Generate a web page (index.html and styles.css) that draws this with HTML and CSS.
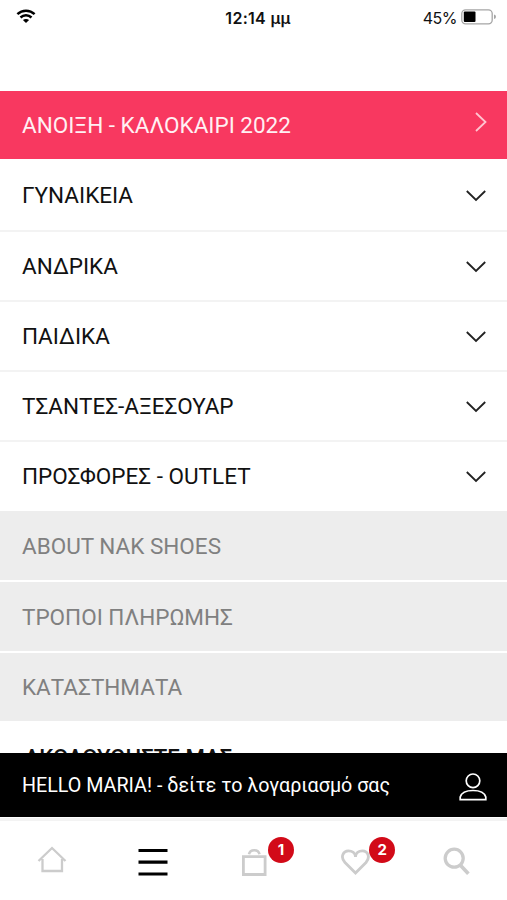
FILE: index.html
```html
<!DOCTYPE html>
<html lang="el">
<head>
<meta charset="utf-8">
<meta name="viewport" content="width=device-width, initial-scale=1">
<title>NAK Shoes</title>
<link rel="stylesheet" href="styles.css">
</head>
<body>
<div class="app">
  <header class="status">
    <svg class="wifi" width="20" height="15" viewBox="0 0 20 15" fill="none" stroke="#000" stroke-width="2.5"><path d="M1.4 5.2C6.2.6 13.8.6 18.6 5.2M4.5 8.5C7.6 5.6 12.4 5.6 15.5 8.5"/><path d="M10 14L6.9 11C8.6 9.5 11.4 9.5 13.1 11Z" fill="#000" stroke="none"/></svg>
    <span class="time">12:14 μμ</span>
    <div class="power">
      <span>45%</span>
      <svg width="36" height="16" viewBox="0 0 36 16"><rect x=".8" y=".8" width="30.4" height="14" rx="3.8" fill="#fff" stroke="#a5a5a5" stroke-width="1.3"/><rect x="2.8" y="2.6" width="11.7" height="10.4" rx="1" fill="#000"/><path d="M33 5.6Q35 6 35 7.8T33 10Z" fill="#a5a5a5"/></svg>
    </div>
  </header>
  <main class="menu">
    <a class="row promo"><span>ΑΝΟΙΞΗ - ΚΑΛΟΚΑΙΡΙ 2022</span><svg class="next" width="12" height="20" viewBox="0 0 12 20"><path d="M1 1L10.5 10L1 19"/></svg></a>
    <a class="row"><span>ΓΥΝΑΙΚΕΙΑ</span><svg class="down" width="20" height="12" viewBox="0 0 20 12"><path d="M.8 1L10 10L19.2 1"/></svg></a>
    <a class="row"><span>ΑΝΔΡΙΚΑ</span><svg class="down" width="20" height="12" viewBox="0 0 20 12"><path d="M.8 1L10 10L19.2 1"/></svg></a>
    <a class="row"><span>ΠΑΙΔΙΚΑ</span><svg class="down" width="20" height="12" viewBox="0 0 20 12"><path d="M.8 1L10 10L19.2 1"/></svg></a>
    <a class="row"><span>ΤΣΑΝΤΕΣ-ΑΞΕΣΟΥΑΡ</span><svg class="down" width="20" height="12" viewBox="0 0 20 12"><path d="M.8 1L10 10L19.2 1"/></svg></a>
    <a class="row last"><span>ΠΡΟΣΦΟΡΕΣ - OUTLET</span><svg class="down" width="20" height="12" viewBox="0 0 20 12"><path d="M.8 1L10 10L19.2 1"/></svg></a>
    <a class="row info first"><span>ABOUT NAK SHOES</span></a>
    <a class="row info"><span>ΤΡΟΠΟΙ ΠΛΗΡΩΜΗΣ</span></a>
    <a class="row info last"><span>ΚΑΤΑΣΤΗΜΑΤΑ</span></a>
    <h2 class="follow">ΑΚΟΛΟΥΘΗΣΤΕ ΜΑΣ</h2>
  </main>
  <a class="account">
    <span>HELLO MARIA! - δείτε το λογαριασμό σας</span>
    <svg width="28" height="28" viewBox="0 0 28 28" fill="none" stroke="#fff" stroke-width="1.7"><circle cx="14" cy="7.8" r="6.8"/><path d="M1.2 26.7V24C2.5 19.5 7 17.5 14 17.5S25.5 19.5 26.8 24V26.7Z"/></svg>
  </a>
  <nav class="tabs">
    <a><svg width="30" height="30" viewBox="0 0 30 30" fill="none" stroke="#ccc" stroke-width="2.3"><path d="M1.5 15L15 2L28.5 15M5.5 13V25H25V13"/></svg></a>
    <a><svg width="30" height="30" viewBox="0 0 30 30" stroke="#000" stroke-width="3.2"><path d="M.5 4.5H29.5M.5 16.2H29.5M.5 28H29.5"/></svg></a>
    <a><svg width="30" height="30" viewBox="0 0 30 30" fill="none" stroke="#ccc" stroke-width="2.8"><path d="M4.4 10.6H26.1V28.5H4.4Z"/><path d="M10 8.3C11 2.8 19.5 2.8 20.5 8.3" stroke-width="2.6"/></svg><b class="badge">1</b></a>
    <a><svg width="30" height="30" viewBox="0 0 30 30" fill="none" stroke="#ccc" stroke-width="2.8"><path d="M15.5 27L5 16.5C-.2 10.8 3.5 4.9 8.3 4.9C12 4.9 15.5 7 15.5 11C15.5 7 18.8 4.9 22.5 4.9C27.5 4.9 30.8 10.8 26 16.5Z"/></svg><b class="badge">2</b></a>
    <a><svg width="30" height="30" viewBox="0 0 30 30" fill="none" stroke="#ccc" stroke-width="3.3"><circle cx="13.2" cy="12.2" r="9"/><path d="M19.2 19L27.4 27.7" stroke-width="3.6"/></svg></a>
  </nav>
</div>
</body>
</html>
```
FILE: styles.css
```css
* { box-sizing: border-box; }

body {
  margin: 0;
  background: #fff;
  color: #111;
  font-family: Roboto, "Liberation Sans", sans-serif;
}

.app {
  height: 900px;
  display: flex;
  flex-direction: column;
  overflow: hidden;
}

.status {
  height: 91px;
  flex: none;
  display: grid;
  grid-template-columns: 1fr auto 1fr;
  align-items: start;
  padding: 7px 10px 0 16px;
  font-family: Inter, sans-serif;
  font-size: 16px;
  line-height: 22px;
}

.wifi { margin-top: 2px; }
.time { font-weight: 600; letter-spacing: .3px; margin-left: 3px; }

.power {
  display: flex;
  justify-content: flex-end;
  gap: 4px;
  letter-spacing: -.5px;
}

.power svg { margin-top: 2px; }

.menu {
  height: 662px;
  flex: none;
  overflow: hidden;
}

.row {
  height: 70.25px;
  display: flex;
  align-items: center;
  justify-content: space-between;
  padding: 0 21px 0 22px;
  border-bottom: 2px solid #f3f3f3;
  font-size: 22.5px;
  line-height: 30px;
  white-space: nowrap;
}

.row svg {
  margin-top: 2px;
  fill: none;
  stroke: #222;
  stroke-width: 1.8;
}

.promo {
  background: #f83860;
  color: #fff0f3;
  border-color: #fff;
}

.promo svg {
  stroke: #ffc4d0;
  margin: -6px -1px 0 0;
}

.info {
  background: #ededed;
  color: #808080;
  border-color: #fff;
}

.info span { padding-top: 1px; }

.last {
  height: 68.25px;
  border-bottom-width: 0;
}

.first {
  height: 71.75px;
  padding-top: 1px;
}

.follow {
  margin: 0;
  padding: 21px 24.5px 0;
  font-size: 22.2px;
  line-height: 30px;
  font-weight: 500;
}

.account {
  height: 64px;
  flex: none;
  display: flex;
  align-items: center;
  justify-content: space-between;
  padding: 0 20px 0 22px;
  background: #000;
  color: #fff;
  font-size: 19.7px;
  white-space: nowrap;
}

.account svg { margin-top: 4px; }

.tabs {
  flex: 1;
  display: grid;
  grid-template-columns: repeat(5, 1fr);
  margin-top: 1px;
  padding: 25px 0 0 1px;
  border-top: 3px solid #f3f3f3;
}

.tabs a {
  position: relative;
  display: flex;
  justify-content: center;
}

.badge {
  position: absolute;
  left: calc(50% + 14px);
  top: -9px;
  width: 26px;
  height: 26px;
  border-radius: 50%;
  background: #d20a18;
  color: #fff;
  font: 700 15px/26px Inter, sans-serif;
  text-align: center;
}
```
